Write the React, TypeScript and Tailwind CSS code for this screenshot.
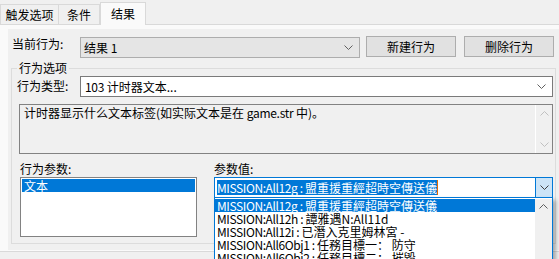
import React from "react";

function Chevron({ up = false, color = "#606060" }: { up?: boolean; color?: string }) {
    return (
        <svg width="9" height="5" viewBox="0 0 9 5" className="block">
            <polyline
                points={up ? "0.5,4.5 4.5,0.5 8.5,4.5" : "0.5,0.5 4.5,4.5 8.5,0.5"}
                fill="none"
                stroke={color}
                strokeWidth="1"
            />
        </svg>
    );
}

// Latin key prefix is set a little tighter, closer to the narrow system UI face
function Entry({ text }: { text: string }) {
    const idx = text.indexOf(" : ");
    return (
        <>
            <span className="tracking-[-0.4px]">{text.slice(0, idx + 3)}</span>
            {text.slice(idx + 3)}
        </>
    );
}

const items = [
    "MISSION:All12g : 盟重援重經超時空傳送儀",
    "MISSION:All12h : 譚雅遇N:All11d",
    "MISSION:All12i : 已潛入克里姆林宮 -",
    "MISSION:All6Obj1 : 任務目標一： 防守",
    "MISSION:All6Obj2 : 任務目標二： 摧毀",
];

export default function App() {
    return (
        <div className="relative h-[259px] w-[559px] overflow-hidden bg-[#f0f0f0] font-['Noto_Sans_CJK_SC','Noto_Sans_CJK_TC',sans-serif] text-[12px] leading-[14px] text-black">
            {/* Tab strip */}
            <div className="flex h-[24px] items-end">
                <div className="flex h-[20px] w-[59px] items-center justify-center border border-b-0 border-[#d9d9d9] bg-[#f0f0f0]">
                    触发选项
                </div>
                <div className="flex h-[20px] w-[41px] items-center justify-center border border-b-0 border-l-0 border-[#d9d9d9] bg-[#f0f0f0]">
                    条件
                </div>
                <div className="relative z-10 -mb-px flex h-[23px] w-[46px] items-start justify-center border border-b-0 border-[#d9d9d9] bg-[#fafafa] pt-[4px]">
                    结果
                </div>
            </div>

            {/* Tab body */}
            <div className="h-[228px] border-y border-[#d9d9d9] bg-[#fafafa] pt-[4px]">
                <div className="ml-[8px] h-[221px] bg-[#f0f0f0]">
                    {/* Current action row */}
                    <div className="flex items-start pt-[7px]">
                        <div className="ml-[4px] mt-[1px] w-[68px]">当前行为:</div>
                        <div className="mt-px flex h-[21px] w-[280px] items-center justify-between border border-[#adadad] bg-[#e5e5e5] pl-[3px] pr-[6px]">
                            <span>结果 1</span>
                            <Chevron />
                        </div>
                        <button className="ml-[6px] flex h-[21px] w-[90px] items-center justify-center border border-[#adadad] bg-[#e1e1e1]">
                            新建行为
                        </button>
                        <button className="ml-[8px] flex h-[21px] w-[90px] items-center justify-center border border-[#adadad] bg-[#e1e1e1]">
                            删除行为
                        </button>
                    </div>

                    {/* Group box */}
                    <div className="relative ml-[3px] mt-[10px] h-[176px] w-[545px] border border-[#dcdcdc]">
                        <span className="absolute -top-[8px] left-[5px] bg-[#f0f0f0] px-[2px]">行为选项</span>
                        <div className="pl-[5px] pt-[7px]">
                            <div className="flex items-start">
                                <div className="mt-[3px] w-[63px]">行为类型:</div>
                                <div className="flex h-[21px] w-[473px] items-center justify-between border border-[#7a7a7a] bg-white pl-[4px] pr-[6px]">
                                    <span>
                                        <span className="tracking-[-0.3px]">103</span> 计时器文本...
                                    </span>
                                    <Chevron />
                                </div>
                            </div>

                            <div className="ml-[2px] mt-[7px] flex h-[50px] w-[534px] border border-[#828282] bg-[#f0f0f0]">
                                <div className="flex-1 pl-[4px] pt-[1px]">
                                    计时器显示什么文本标签(如实际文本是在 <span className="tracking-[-0.3px]">game.str</span> 中)。
                                </div>
                                <div className="flex w-[17px] flex-col items-center justify-between border-l border-white py-[6px]">
                                    <Chevron up color="#c0c0c0" />
                                    <Chevron color="#c0c0c0" />
                                </div>
                            </div>

                            <div className="mt-[8px] flex">
                                <div className="ml-[3px] w-[194px]">行为参数:</div>
                                <div>参数值:</div>
                            </div>

                            <div className="mt-px flex items-start">
                                <div className="ml-[3px] h-[60px] w-[177px] border border-[#828282] bg-white p-px">
                                    <div className="h-[13px] bg-[#0078d7] pl-[2px] leading-[13px] text-white">文本</div>
                                </div>

                                <div className="relative ml-[17px] w-[339px]">
                                    <div className="flex h-[21px] border border-[#0078d7] bg-white">
                                        <div className="flex flex-1 items-center pl-[2px]">
                                            <span className="h-[15px] whitespace-nowrap bg-[#0078d7] leading-[15px] text-white">
                                                <Entry text={items[0]} />
                                            </span>
                                            <span className="h-[15px] w-px bg-[#e06c00]" />
                                        </div>
                                        <div className="flex w-[17px] items-center justify-center border-l border-[#0078d7] bg-[#cce4f7]">
                                            <Chevron color="#404040" />
                                        </div>
                                    </div>

                                    {/* Dropdown list */}
                                    <div className="absolute left-0 top-[20px] z-20 flex h-[80px] w-[339px] border border-[#0078d7] bg-white pt-px shadow-[3px_3px_4px_rgba(0,0,0,0.3)]">
                                        <div className="flex-1">
                                            {items.map((item, i) => (
                                                <div
                                                    key={item}
                                                    className={
                                                        i === 0
                                                            ? "h-[13px] whitespace-nowrap bg-[#0078d7] pl-[2px] leading-[13px] text-white"
                                                            : "h-[13px] whitespace-nowrap pl-[2px] leading-[13px]"
                                                    }
                                                >
                                                    <Entry text={item} />
                                                </div>
                                            ))}
                                        </div>
                                        <div className="flex w-[17px] flex-col items-center bg-[#f0f0f0] pt-[5px]">
                                            <Chevron up color="#606060" />
                                        </div>
                                    </div>
                                </div>
                            </div>
                        </div>
                    </div>
                </div>
            </div>
        </div>
    );
}
